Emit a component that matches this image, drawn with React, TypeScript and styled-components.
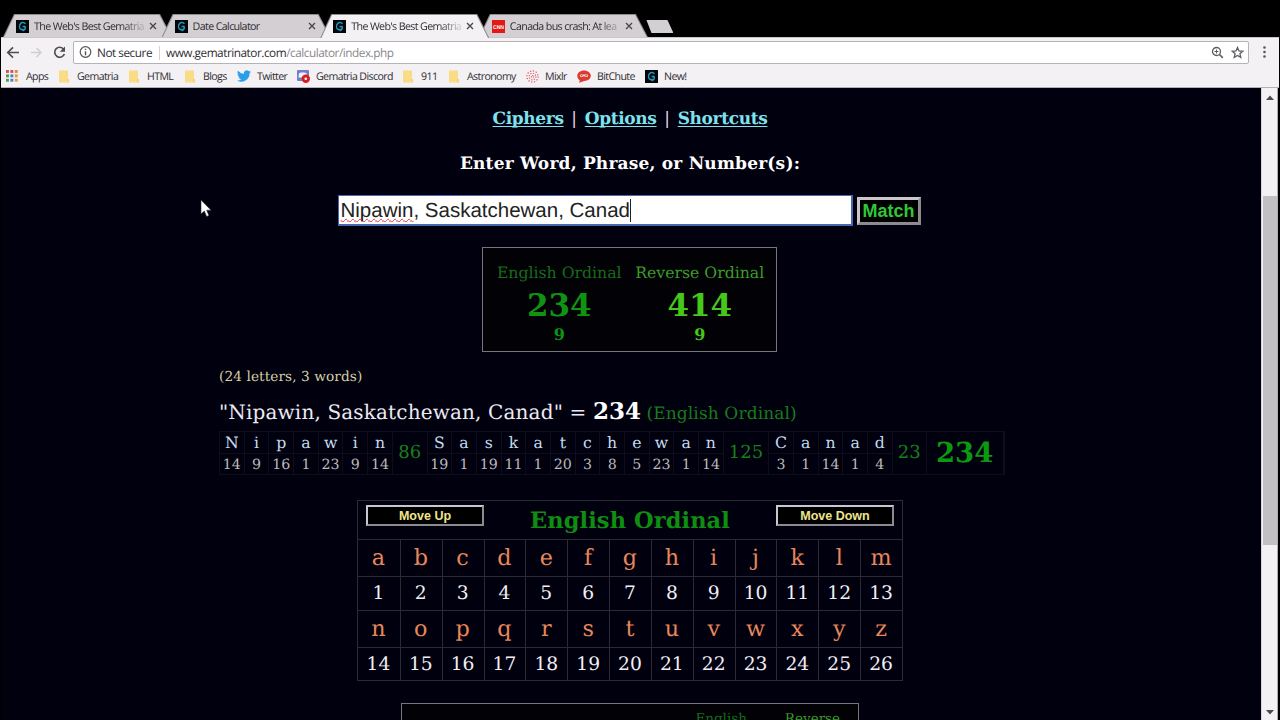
import React from "react";
import styled, { createGlobalStyle } from "styled-components";

const Global = createGlobalStyle`
  * { box-sizing: border-box; }
  html, body { margin: 0; padding: 0; background: #000; overflow: hidden; }
`;

const ui = `"Open Sans", "Noto Sans", sans-serif`;
const book = `"Bookman Old Style", "DejaVu Serif", serif`;
const arial = `"Liberation Sans", Arial, sans-serif`;

const Screen = styled.div`
  width: 1280px;
  height: 720px;
  display: flex;
  flex-direction: column;
  overflow: hidden;
  background: #000;
  padding: 14px 1px 0 1px;
  position: relative;
  text-rendering: geometricPrecision;
`;

/* ---------- Browser chrome ---------- */
const TabStrip = styled.div`
  height: 24px;
  display: flex;
  align-items: flex-start;
  padding-left: 2px;
`;

const TabBox = styled.div<{ $active?: boolean }>`
  position: relative;
  z-index: ${(p) => (p.$active ? 2 : 1)};
  width: 169px;
  height: 24px;
  margin-right: -10.4px;
  padding: 0 0 0 13px;
  display: flex;
  align-items: center;
  &::before, &::after {
    content: "";
    position: absolute;
    inset: 0 0 ${(p) => (p.$active ? "0" : "1px")} 0;
    background: #8f8d91;
    clip-path: polygon(11px 0, 157px 0, 100% 100%, 0 100%);
    z-index: -1;
  }
  &::after {
    background: ${(p) => (p.$active ? "#f3f1f4" : "#d3cfd3")};
    clip-path: polygon(11.8px 1px, 156.3px 1px, calc(100% - 1.2px) 100%, 1.2px 100%);
  }
`;

const TabTitle = styled.span<{ $fade?: boolean }>`
  width: 110px;
  margin-left: 5px;
  padding-top: 1px;
  white-space: nowrap;
  font: 10.7px/20px ${ui};
  letter-spacing: -0.64px;
  color: #2f2d33;
  mask-image: ${(p) => (p.$fade ? "linear-gradient(90deg, #000 80%, rgba(0, 0, 0, 0.15))" : "none")};
`;

const TabClose = styled.svg`
  width: 8px;
  height: 8px;
  margin-left: 5px;
`;

const NewTab = styled.div`
  width: 28px;
  height: 13px;
  margin: 6px 0 0 8px;
  background: #d3d0d3;
  clip-path: polygon(1px 0, 22px 0, 28px 100%, 6px 100%);
`;

const Toolbar = styled.div`
  height: 28px;
  margin-top: -1px;
  flex: none;
  display: flex;
  align-items: center;
  background: #f3f1f4;
  border-top: 1px solid #c9c7ca;
  padding: 1px 0 0 5px;
`;

const NavIcon = styled.svg`
  width: 15px;
  height: 15px;
  margin-right: 8px;
`;

const UrlBar = styled.div`
  width: 1176px;
  height: 23px;
  margin-left: -2px;
  display: flex;
  align-items: center;
  background: #fff;
  border: 1px solid #b5b3b7;
  border-radius: 2px;
  padding: 1px 0 0 5px;
  font: 11.8px/20px ${ui};
  letter-spacing: -0.48px;
  color: #2f2d33;
  white-space: nowrap;
`;

const Security = styled.span`
  margin-left: 5px;
  width: 63px;
  border-right: 1px solid #d4d2d5;
  line-height: 14px;
  margin-right: 6px;
`;

const UrlText = styled.span`
  flex: 1;
  span { color: #8a888d; }
`;

const UrlActions = styled.svg`
  margin-right: -1px;
`;

const Menu = styled.svg`
  width: 5px;
  height: 14px;
  margin-left: 13px;
`;

const Bookmarks = styled.div`
  height: 23px;
  flex: none;
  display: flex;
  align-items: center;
  background: #f3f1f4;
  border-bottom: 1px solid #b3b1b5;
  padding-left: 5px;
`;

const Bookmark = styled.div<{ $w: number; $gap: number }>`
  width: ${(p) => p.$w}px;
  display: flex;
  align-items: center;
  gap: ${(p) => p.$gap}px;
  font: 10.6px/16px ${ui};
  letter-spacing: -0.6px;
  color: #2f2d33;
  white-space: nowrap;
  svg { flex: none; }
  span { padding-top: 1px; }
`;

/* ---------- Page ---------- */
const Viewport = styled.div`
  flex: 1;
  min-height: 0;
  display: flex;
  padding-right: 1px;
`;

const Page = styled.main`
  width: 1260px;
  background: #01000f;
  display: flex;
  flex-direction: column;
  align-items: center;
  overflow: hidden;
  font-family: ${book};
  color: #fff;
  white-space: nowrap;
  padding: 19px 2px 0 0;
  > * { flex-shrink: 0; }
`;

const Txt = styled.span<{ $s: number; $c?: string; $ls?: number; $b?: boolean }>`
  font-size: ${(p) => p.$s}px;
  color: ${(p) => p.$c ?? "#fff"};
  letter-spacing: ${(p) => p.$ls ?? 0}px;
  font-weight: ${(p) => (p.$b ? 700 : 400)};
`;

const Links = styled.nav`
  width: 275px;
  display: flex;
  justify-content: space-between;
  font-size: 17px;
  line-height: 24px;
  color: #e8d8e0;
  a {
    color: #7fe3ee;
    font-weight: 700;
    letter-spacing: -0.35px;
    text-decoration: underline;
    text-decoration-thickness: 1px;
    text-underline-offset: 2px;
    text-decoration-skip-ink: none;
  }
`;

const Heading = styled.h1`
  margin: 20px 0 0;
  font-size: 17px;
  line-height: 26px;
  font-weight: 700;
  letter-spacing: 0.2px;
`;

const Form = styled.div`
  display: flex;
  align-items: center;
  gap: 4px;
  margin: 18px 2px 0 0;
`;

const Field = styled.div`
  width: 515px;
  height: 31px;
  background: #fff;
  border: 2px solid #4668b0;
  border-width: 1px 2px 2px 1px;
  color: #222;
  font: 20.5px/29px ${arial};
  padding-left: 2px;
  display: flex;
  align-items: center;
  u {
    text-decoration: underline wavy #e0383c 1px;
    text-underline-offset: 1px;
    text-decoration-skip-ink: none;
  }
`;

const Caret = styled.i`
  width: 1px;
  height: 23px;
  background: #222;
`;

const Button = styled.button<{ $w: number; $h: number; $bw: number; $c: string; $s: number }>`
  width: ${(p) => p.$w}px;
  height: ${(p) => p.$h}px;
  padding: 1px 0 0;
  border-style: solid;
  border-width: ${(p) => p.$bw}px;
  border-color: #c9c6cc #8d8b90 #8d8b90 #c9c6cc;
  background: #000;
  color: ${(p) => p.$c};
  font: 700 ${(p) => p.$s}px/1 ${arial};
`;

const ResultBox = styled.section`
  width: 295px;
  height: 105px;
  margin: 21px 1px 0 0;
  border: 1px solid #77757b;
  background: #010106;
  display: flex;
  padding: 12px 6px 0;
`;

const Result = styled.div<{ $c: string; $dim: string }>`
  flex: 1;
  display: flex;
  flex-direction: column;
  align-items: center;
  color: ${(p) => p.$c};
  font-weight: 700;
  span { font: 400 15.7px/25px ${book}; color: ${(p) => p.$dim}; }
  strong { font-size: 31px; line-height: 43px; }
  em { font-style: normal; font-size: 16px; line-height: 13px; }
`;

const Detail = styled.section`
  width: 824px;
  margin-left: 2px;
  display: flex;
  flex-direction: column;
  align-items: flex-start;
`;

const Line = styled.div<{ $h: number }>`
  height: ${(p) => p.$h}px;
  line-height: ${(p) => p.$h}px;
  display: flex;
  align-items: baseline;
`;

const Breakdown = styled.div`
  width: 786px;
  height: 44px;
  margin-top: 9px;
  display: flex;
  border: 1px solid #0e0d1b;
`;

const Letter = styled.div`
  width: 24.7px;
  border-right: 1px solid #0e0d1b;
  text-align: center;
  display: flex;
  flex-direction: column;
  b { font: 400 15.7px/21px ${book}; color: #c3dcec; height: 22px; border-bottom: 1px solid #0e0d1b; }
  span { font-size: 14.2px; line-height: 22px; color: #bcb9b9; }
`;

const Sum = styled.div<{ $w: number; $big?: boolean }>`
  width: ${(p) => p.$w}px;
  border-right: 1px solid #0e0d1b;
  text-align: center;
  line-height: 42px;
  font-size: ${(p) => (p.$big ? 27.5 : 18)}px;
  font-weight: ${(p) => (p.$big ? 700 : 400)};
  color: ${(p) => (p.$big ? "#0b990f" : "#178019")};
`;

const Cipher = styled.section`
  width: 546px;
  height: 181px;
  margin-top: 25px;
  border: 1px solid #2b2a36;
`;

const CipherHead = styled.div`
  height: 38px;
  display: flex;
  justify-content: space-between;
  padding: 4px 8px 0;
  h2 {
    margin: 0;
    font-size: 22.5px;
    line-height: 32px;
    letter-spacing: 0.1px;
    color: #0e8f12;
  }
`;

const CipherGrid = styled.div`
  display: grid;
  grid-template-columns: repeat(13, 1fr);
  grid-template-rows: 37px 34px 37px 34px;
`;

const Cell = styled.div<{ $letter?: boolean; $first?: boolean }>`
  border-top: 1px solid #2b2a36;
  border-left: ${(p) => (p.$first ? 0 : 1)}px solid #2b2a36;
  padding-right: 1px;
  text-align: center;
  font-size: ${(p) => (p.$letter ? 22.3 : 18.7)}px;
  line-height: ${(p) => (p.$letter ? 37 : 33)}px;
  color: ${(p) => (p.$letter ? "#e8875a" : "#f1eff4")};
`;

const NextBox = styled.section`
  width: 458px;
  height: 60px;
  margin-top: 22px;
  border: 1px solid #77757b;
  background: #010106;
  display: flex;
  justify-content: flex-end;
  gap: 38px;
  padding: 4px 18px 0 0;
  line-height: 22px;
`;

const Scrollbar = styled.div`
  width: 17px;
  background: #f3f1f4;
  border-left: 1px solid #d9d7da;
  border-right: 1px solid #b0aeb2;
  display: flex;
  flex-direction: column;
  align-items: center;
  svg { flex: none; }
`;

const ArrowUp = styled.svg`
  margin-top: 7px;
`;

const ArrowDown = styled.svg`
  margin: auto 0 5px;
`;

const Thumb = styled.div`
  width: 14px;
  height: 349px;
  margin-top: 96px;
  background: #c2c0c2;
`;

const Pointer = styled.svg`
  position: absolute;
  left: 200px;
  top: 199px;
`;

/* ---------- Icons ---------- */
const GIcon = ({ size = 13 }: { size?: number }) => (
  <svg width={size} height={size} viewBox="0 0 13 13">
    <rect width="13" height="13" fill="#050608" />
    <path d="M9.400 3.900C8.300 2.300 5.800 2.100 4.500 3.700 3.200 5.400 3.300 8 4.700 9.200 5.600 9.900 6.900 9.800 7.600 9M6.500 6.600h3M9.300 6.600c.2 2-.6 3.600-2.600 4.300" fill="none" stroke="#2197bd" strokeWidth="1.500" />
  </svg>
);

const CnnIcon = () => (
  <svg width="13" height="13" viewBox="0 0 13 13">
    <rect width="13" height="13" fill="#e01b17" />
    <text x="1" y="8.500" fill="#fff" fontSize="5.500" fontWeight="700" fontFamily="Liberation Sans" textLength="11" lengthAdjust="spacingAndGlyphs">CNN</text>
  </svg>
);

const Folder = () => (
  <svg width="10" height="13" viewBox="0 0 10 13">
    <path d="M0 .5h9v8.500h1v3.500H0z" fill="#fbdc86" />
    <path d="M8.500 9H10v3.500H8.500z" fill="#f3d077" />
  </svg>
);

const appColors = ["#d8524a", "#d8524a", "#dd8a3c", "#4f9a58", "#4a7fd0", "#dd9c3c", "#4f9a58", "#4a7fd0", "#e0a53c"];
const Apps = () => (
  <svg width="12" height="12" viewBox="0 0 12 12">
    {appColors.map((c, i) => (
      <rect key={i} x={(i % 3) * 4.4} y={Math.floor(i / 3) * 4.4} width="2.900" height="2.900" fill={c} />
    ))}
  </svg>
);

const Twitter = () => (
  <svg width="14" height="12" viewBox="0 2 24 20">
    <path fill="#2a9fe8" d="M24 4.600a10 10 0 0 1-2.800.8 5 5 0 0 0 2.100-2.700 10 10 0 0 1-3.100 1.200A4.900 4.900 0 0 0 11.800 8.400 14 14 0 0 1 1.700 3.200a4.900 4.900 0 0 0 1.500 6.600 5 5 0 0 1-2.200-.6c0 2.300 1.600 4.400 3.900 4.900a5 5 0 0 1-2.200.1 4.900 4.900 0 0 0 4.600 3.400A9.900 9.900 0 0 1 0 19.500 14 14 0 0 0 21.500 7.100 10 10 0 0 0 24 4.600z" />
  </svg>
);

const Discord = () => (
  <svg width="13" height="13" viewBox="0 0 13 13">
    <rect width="12" height="11" rx="1" fill="#7280cc" />
    <path d="M2 3.200 4 2.400h3.500l2 .8.8 4.300H1.500z" fill="#f1f2fa" />
    <circle cx="8.800" cy="8.800" r="4.200" fill="#d81e1e" />
    <circle cx="8.800" cy="8.800" r="1.300" fill="#fff" />
  </svg>
);

const Mixlr = () => (
  <svg width="13" height="13" viewBox="0 0 13 13" fill="none" stroke="#e0535a" strokeWidth="1.200">
    <circle cx="6.500" cy="6.500" r="5.600" strokeDasharray="1.200 1.700" />
    <circle cx="6.500" cy="6.500" r="3.300" strokeDasharray="1.100 1.500" />
    <circle cx="6.500" cy="6.500" r="1" strokeDasharray="1 1" />
  </svg>
);

const BitChute = () => (
  <svg width="14" height="13" viewBox="0 0 14 13">
    <path d="M7 .5c3.800 0 6.800 2.300 6.800 5.300S11 11 7.300 11L2 12.700l.8-2.500C1.200 9.200.3 7.700.3 5.900.3 2.800 3.200.5 7 .5z" fill="#dc3b32" />
    <path d="M3.200 4.400h7.600v2.600H8.400L7 6l-1.400 1H3.200z" fill="#f6d8d6" />
    <circle cx="4.800" cy="5.700" r=".8" fill="#dc3b32" />
    <circle cx="9.200" cy="5.700" r=".8" fill="#dc3b32" />
  </svg>
);

const tabs = [
  { title: "The Web's Best Gematria", icon: <GIcon />, fade: true },
  { title: "Date Calculator", icon: <GIcon /> },
  { title: "The Web's Best Gematria", icon: <GIcon />, fade: true, active: true },
  { title: "Canada bus crash: At lea", icon: <CnnIcon />, fade: true },
];

const bookmarks = [
  { label: "Apps", icon: <Apps />, w: 53, gap: 8 },
  { label: "Gematria", icon: <Folder />, w: 70, gap: 8 },
  { label: "HTML", icon: <Folder />, w: 56, gap: 8 },
  { label: "Blogs", icon: <Folder />, w: 52, gap: 8 },
  { label: "Twitter", icon: <Twitter />, w: 60, gap: 6 },
  { label: "Gematria Discord", icon: <Discord />, w: 106, gap: 6 },
  { label: "911", icon: <Folder />, w: 46, gap: 8 },
  { label: "Astronomy", icon: <Folder />, w: 77, gap: 8 },
  { label: "Mixlr", icon: <Mixlr />, w: 51, gap: 6 },
  { label: "BitChute", icon: <BitChute />, w: 68, gap: 6 },
  { label: "New!", icon: <GIcon />, w: 60, gap: 6 },
];

const words = [
  { text: "Nipawin", sum: 86, w: 34.7 },
  { text: "Saskatchewan", sum: 125, w: 45.5 },
  { text: "Canad", sum: 23, w: 34 },
];

const value = (ch: string) => ch.toLowerCase().charCodeAt(0) - 96;
const rows = ["abcdefghijklm", "nopqrstuvwxyz"];

export default function App() {
  return (
    <Screen>
      <Global />
      <TabStrip>
        {tabs.map((t, i) => (
          <TabBox key={i} $active={t.active}>
            {t.icon}
            <TabTitle $fade={t.fade}>{t.title}</TabTitle>
            <TabClose viewBox="0 0 8 8"><path d="M1 1l6 6M7 1L1 7" stroke="#4a484d" strokeWidth="1.400" /></TabClose>
          </TabBox>
        ))}
        <NewTab />
      </TabStrip>
      <Toolbar>
        <NavIcon viewBox="0 0 15 15"><path d="M13 7.500H2M7 2.300L1.800 7.500 7 12.700" fill="none" stroke="#4f4d52" strokeWidth="1.700" /></NavIcon>
        <NavIcon viewBox="0 0 15 15"><path d="M2 7.500h10M7.500 3L12 7.500 7.500 12" fill="none" stroke="#cfcdd1" strokeWidth="1.500" /></NavIcon>
        <NavIcon viewBox="0 0 15 15">
          <path d="M11.700 4.200A5 5 0 1 0 12.400 9" fill="none" stroke="#4f4d52" strokeWidth="1.700" />
          <path d="M13 1.500v5.200H7.800z" fill="#4f4d52" />
        </NavIcon>
        <UrlBar>
          <svg width="13" height="13" viewBox="0 0 13 13" fill="none" stroke="#57555a">
            <circle cx="6.500" cy="6" r="5.300" strokeWidth="1.200" />
            <path d="M6.500 5.200v4M6.500 2.700v1.400" strokeWidth="1.400" />
          </svg>
          <Security>Not secure</Security>
          <UrlText>www.gematrinator.com<span>/calculator/index.php</span></UrlText>
          <UrlActions width="38" height="14" viewBox="0 0 38 14" fill="none" stroke="#5f5d62" strokeWidth="1.300">
            <circle cx="5.500" cy="5.500" r="4" />
            <path d="M8.500 8.500l3.300 3.300" strokeWidth="1.700" />
            <path d="M3.500 5.500h4M5.500 3.500v4" strokeWidth="1" />
            <path d="M26.500 1.500l1.500 3.500 3.700.3-2.800 2.400.9 3.700-3.300-2-3.300 2 .9-3.700-2.800-2.400 3.700-.3z" />
          </UrlActions>
        </UrlBar>
        <Menu viewBox="0 0 5 14" fill="#5a585d"><circle cx="2.500" cy="2.500" r="1.300" /><circle cx="2.500" cy="7" r="1.300" /><circle cx="2.500" cy="11.500" r="1.300" /></Menu>
      </Toolbar>
      <Bookmarks>
        {bookmarks.map((b) => (
          <Bookmark key={b.label} $w={b.w} $gap={b.gap}>{b.icon}<span>{b.label}</span></Bookmark>
        ))}
      </Bookmarks>
      <Viewport>
        <Page>
          <Links><a>Ciphers</a>|<a>Options</a>|<a>Shortcuts</a></Links>
          <Heading>Enter Word, Phrase, or Number(s):</Heading>
          <Form>
            <Field><u>Nipawin</u>, Saskatchewan, Canad<Caret /></Field>
            <Button $w={64} $h={28} $bw={3} $c="#2fc738" $s={18}>Match</Button>
          </Form>
          <ResultBox>
            <Result $c="#0f9412" $dim="#176c19"><span>English Ordinal</span><strong>234</strong><em>9</em></Result>
            <Result $c="#46c81b" $dim="#3c9d26"><span>Reverse Ordinal</span><strong>414</strong><em>9</em></Result>
          </ResultBox>
          <Detail>
            <Line $h={50}><Txt $s={13.7} $c="#d8d1a5" $ls={0.08}>(24 letters, 3 words)</Txt></Line>
            <Line $h={20}>
              <Txt $s={20} $c="#eceaf0" $ls={0.15}>"Nipawin, Saskatchewan, Canad" =&nbsp;</Txt>
              <Txt $s={23} $b>234</Txt>
              <Txt $s={17} $c="#187c1b" $ls={0.12}>&nbsp;(English Ordinal)</Txt>
            </Line>
            <Breakdown>
              {words.map((w) => (
                <React.Fragment key={w.text}>
                  {w.text.split("").map((ch, i) => (
                    <Letter key={i}><b>{ch}</b><span>{value(ch)}</span></Letter>
                  ))}
                  <Sum $w={w.w}>{w.sum}</Sum>
                </React.Fragment>
              ))}
              <Sum $w={77} $big>234</Sum>
            </Breakdown>
          </Detail>
          <Cipher>
            <CipherHead>
              <Button $w={118} $h={21} $bw={2} $c="#efe48c" $s={12.5}>Move Up</Button>
              <h2>English Ordinal</h2>
              <Button $w={118} $h={21} $bw={2} $c="#efe48c" $s={12.5}>Move Down</Button>
            </CipherHead>
            <CipherGrid>
              {rows.map((r) => (
                <React.Fragment key={r}>
                  {r.split("").map((ch, i) => <Cell key={ch} $letter $first={i === 0}>{ch}</Cell>)}
                  {r.split("").map((ch, i) => <Cell key={ch + "n"} $first={i === 0}>{value(ch)}</Cell>)}
                </React.Fragment>
              ))}
            </CipherGrid>
          </Cipher>
          <NextBox>
            <Txt $s={13.5} $c="#12701a">English</Txt>
            <Txt $s={13.5} $c="#3a9a26">Reverse</Txt>
          </NextBox>
        </Page>
        <Scrollbar>
          <ArrowUp width="8" height="5" viewBox="0 0 8 5"><path d="M0 5l4-4.500L8 5z" fill="#4c4a4f" /></ArrowUp>
          <Thumb />
          <ArrowDown width="8" height="5" viewBox="0 0 8 5"><path d="M0 0l4 4.500L8 0z" fill="#4c4a4f" /></ArrowDown>
        </Scrollbar>
      </Viewport>
      <Pointer width="12" height="19" viewBox="0 0 12 19">
        <path d="M1 1v14l3.300-3 2.300 5.500 2.300-1L6.700 11.200H11z" fill="#fff" stroke="#333" strokeWidth=".6" />
      </Pointer>
    </Screen>
  );
}
